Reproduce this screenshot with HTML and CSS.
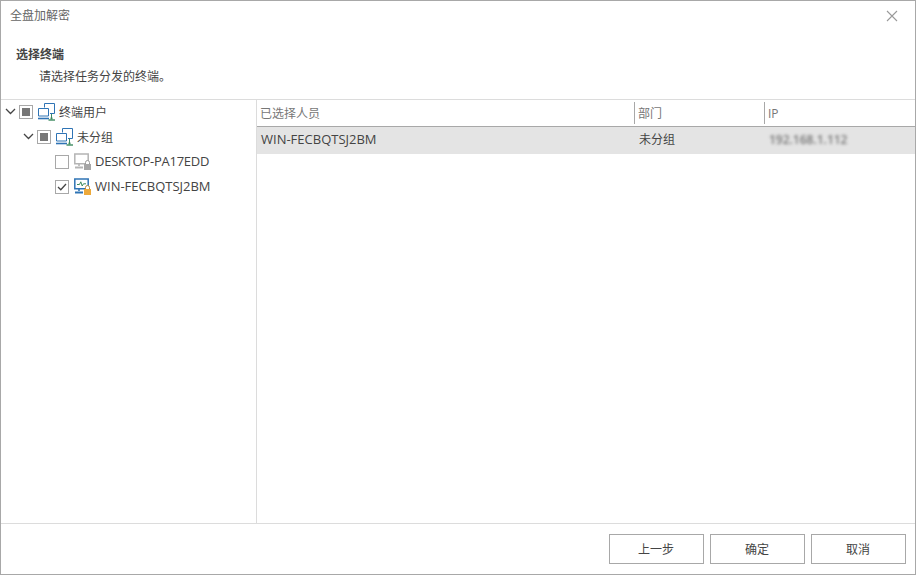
FILE: index.html
```html
<!DOCTYPE html>
<html lang="zh-CN">
<head>
<meta charset="utf-8">
<title>全盘加解密</title>
<link rel="stylesheet" href="styles.css">
</head>
<body>
<svg class="defs" width="0" height="0" aria-hidden="true">
  <symbol id="net" viewBox="0 0 18 18">
    <path d="M6.5 4.5V0.5H16.5V10.5H12" fill="none" stroke="#2f74b5" stroke-width="1"/>
    <path d="M0.5 5.5H10.5V13H0.5Z" fill="#fff" stroke="#2f74b5" stroke-width="1"/>
    <path d="M0 15.5H11" stroke="#2f74b5" stroke-width="1.6"/>
    <path d="M13.5 11V15" stroke="#3d8a5f" stroke-width="1"/>
    <path d="M10.5 17H17" stroke="#3d8a5f" stroke-width="1.4"/>
    <rect x="12.5" y="14.5" width="2" height="2" fill="#3d8a5f"/>
  </symbol>
</svg>
<div class="dialog">
  <header class="titlebar">
    <span class="title">全盘加解密</span>
    <svg class="close" width="12" height="12" viewBox="0 0 12 12"><path d="M1 1L11 11M11 1L1 11" stroke="#9a9a9a" stroke-width="1.1" fill="none"/></svg>
  </header>
  <section class="intro">
    <h1>选择终端</h1>
    <p>请选择任务分发的终端。</p>
  </section>
  <main class="body">
    <aside class="tree">
      <div class="node lvl0">
        <svg class="chev" width="11" height="7" viewBox="0 0 11 7"><path d="M1 1L5.5 5.5L10 1" fill="none" stroke="#444" stroke-width="1.3"/></svg>
        <span class="check mixed"></span>
        <svg class="ico" width="18" height="18"><use href="#net"/></svg>
        <span>终端用户</span>
      </div>
      <div class="node lvl1">
        <svg class="chev" width="11" height="7" viewBox="0 0 11 7"><path d="M1 1L5.5 5.5L10 1" fill="none" stroke="#444" stroke-width="1.3"/></svg>
        <span class="check mixed"></span>
        <svg class="ico" width="18" height="18"><use href="#net"/></svg>
        <span>未分组</span>
      </div>
      <div class="node lvl2">
        <span class="check"></span>
        <svg class="ico" width="18" height="18" viewBox="0 0 18 18">
          <path d="M0.8 1H14.2V10.8H0.8Z" fill="#fff" stroke="#b4b4b4" stroke-width="1.5"/>
          <path d="M1 14.5H9" stroke="#b4b4b4" stroke-width="2"/>
          <path d="M5 11V13" stroke="#b4b4b4" stroke-width="1.6"/>
          <path d="M11.5 11V9.5a2 2 0 0 1 4 0V11" fill="#fff" stroke="#9a9a9a"/>
          <rect x="10" y="11" width="7" height="6" fill="#a6a6a6"/>
        </svg>
        <span class="latin tight">DESKTOP-PA17EDD</span>
      </div>
      <div class="node lvl2">
        <span class="check">
          <svg width="12" height="12" viewBox="0 0 12 12"><path d="M2 6L4.8 8.8L10 3" fill="none" stroke="#444" stroke-width="1.3"/></svg>
        </span>
        <svg class="ico" width="18" height="18" viewBox="0 0 18 18">
          <path d="M0.8 1H14.2V10.8H0.8Z" fill="#fff" stroke="#2f74b5" stroke-width="1.5"/>
          <path d="M3 6.5H5.5L6.8 3.8L8.2 8L9.5 5.8H12" fill="none" stroke="#3d8a5f" stroke-width="1"/>
          <path d="M1 14.5H9" stroke="#2f74b5" stroke-width="2"/>
          <path d="M5 11V13" stroke="#2f74b5" stroke-width="1.6"/>
          <path d="M11.5 11V9.5a2 2 0 0 1 4 0V11" fill="#fff" stroke="#b08a45"/>
          <rect x="10" y="11" width="7" height="6" fill="#eda93a"/>
        </svg>
        <span class="latin">WIN-FECBQTSJ2BM</span>
      </div>
    </aside>
    <div class="list">
      <div class="thead">
        <div class="th c1">已选择人员</div>
        <div class="th c2">部门</div>
        <div class="th c3">IP</div>
      </div>
      <div class="row">
        <div class="td c1 latin">WIN-FECBQTSJ2BM</div>
        <div class="td c2">未分组</div>
        <div class="td c3"><span class="blurred">192.168.1.112</span></div>
      </div>
    </div>
  </main>
  <footer class="actions">
    <button type="button">上一步</button>
    <button type="button">确定</button>
    <button type="button">取消</button>
  </footer>
</div>
</body>
</html>
```

FILE: styles.css
```css
* { box-sizing: border-box; }
html, body { margin: 0; padding: 0; height: 100%; background: #fff; }
body {
  font-family: "Open Sans", "Noto Sans CJK SC", sans-serif;
  font-size: 12px;
  color: #444;
  overflow: hidden;
}
.defs { display: block; height: 0; }
.dialog {
  width: 916px;
  height: 575px;
  border: 1px solid #a8a8a8;
  display: flex;
  flex-direction: column;
}
.titlebar {
  height: 30px;
  flex: none;
  display: flex;
  align-items: center;
  justify-content: space-between;
  padding: 0 17px 2px 9px;
}
.title { color: #666; }
.close { display: block; margin-top: 2px; }
.intro { height: 68px; flex: none; padding-top: 15px; }
.intro h1 { margin: 0 0 0 15px; font-size: 12px; line-height: 18px; font-weight: 700; color: #444; }
.intro p { margin: 4px 0 0 38px; line-height: 18px; color: #444; }
.body {
  flex: 1;
  display: flex;
  min-height: 0;
  border-top: 1px solid #dcdcdc;
  border-bottom: 1px solid #dcdcdc;
}
.tree {
  width: 256px;
  flex: none;
  border-right: 1px solid #dcdcdc;
  margin-top: -1px;
}
.node { height: 25px; display: flex; align-items: center; }
.lvl0 { padding-left: 4px; }
.lvl1 { padding-left: 22px; }
.lvl2 { padding-left: 54px; }
.chev { flex: none; margin-right: 3px; }
.check {
  width: 14px;
  height: 14px;
  flex: none;
  border: 1px solid #a8a8a8;
  background: #fff;
  display: flex;
  align-items: center;
  justify-content: center;
}
.check.mixed::after { content: ""; width: 8px; height: 8px; background: #777; }
.ico { flex: none; margin: 0 3px 0 5px; display: block; }
.latin { font-size: 13px; line-height: 16px; padding-bottom: 1px; }
.tight { letter-spacing: -0.26px; }
.list { flex: 1; min-width: 0; }
.thead { height: 27px; display: flex; align-items: center; border-bottom: 1px solid #a8a8a8; }
.th { color: #777; height: 22px; line-height: 22px; padding: 1px 0 0 3px; }
.row { height: 27px; display: flex; align-items: center; background: #e4e4e4; color: #444; padding-bottom: 3px; }
.td { padding-left: 4px; }
.c1 { width: 377px; }
.c2 { width: 130px; border-left: 1px solid transparent; }
.c3 { flex: 1; border-left: 1px solid transparent; }
.th.c2, .th.c3 { border-left-color: #a8a8a8; }
.td.c3 { padding-left: 4px; }
.blurred { filter: blur(1.4px); color: #777; display: inline-block; font-weight: 600; }
.actions {
  height: 50px;
  flex: none;
  display: flex;
  justify-content: flex-end;
  gap: 6px;
  padding: 10px 9px 0 0;
}
button {
  width: 95px;
  height: 30px;
  border: 1px solid #a8a8a8;
  background: #fff;
  color: #444;
  font: inherit;
  padding: 0 1px 0 0;
}
```
